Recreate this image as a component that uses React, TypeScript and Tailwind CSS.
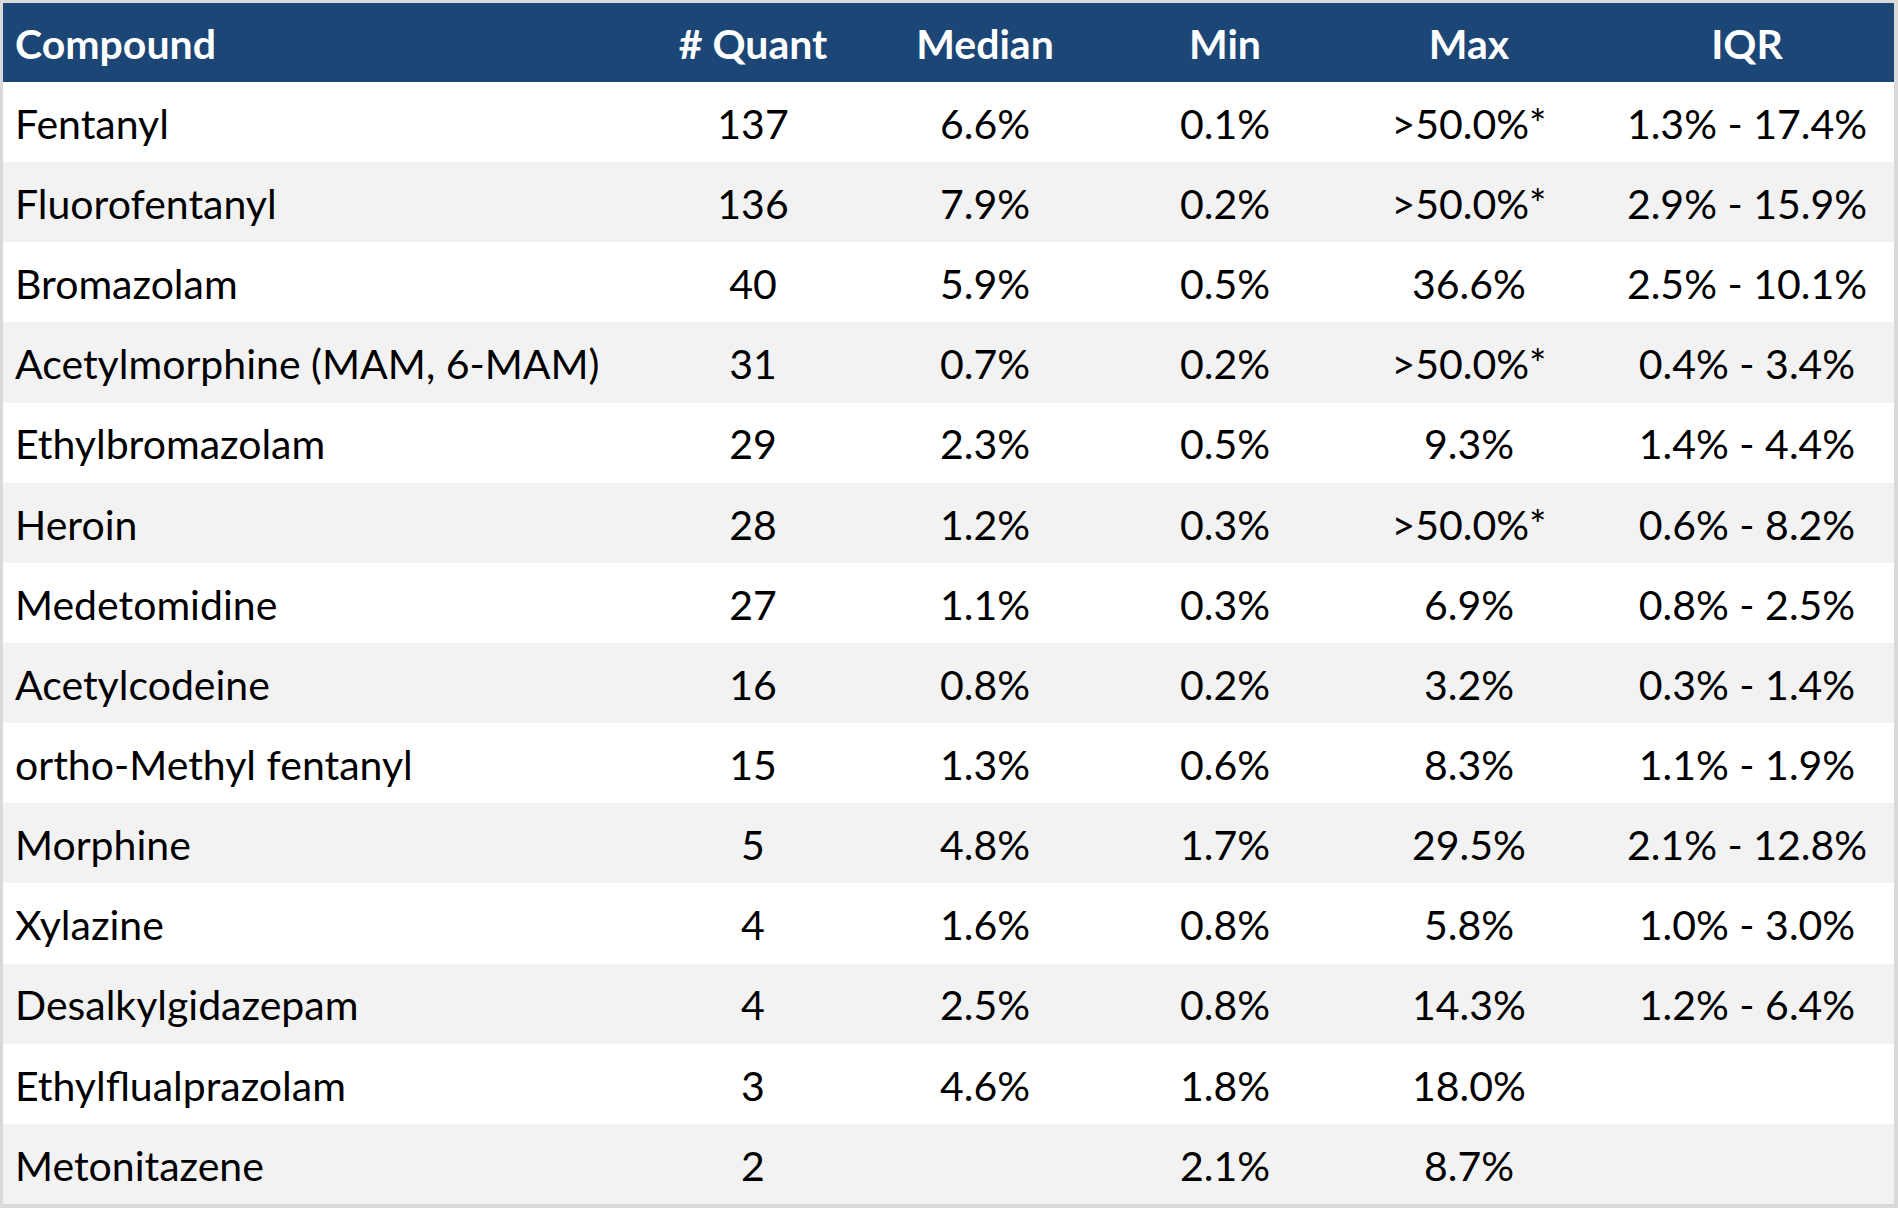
import React from "react";

type Row = {
  compound: string;
  quant: string;
  median: string;
  min: string;
  max: string;
  iqr: string;
};

const rows: Row[] = [
  { compound: "Fentanyl", quant: "137", median: "6.6%", min: "0.1%", max: ">50.0%*", iqr: "1.3% - 17.4%" },
  { compound: "Fluorofentanyl", quant: "136", median: "7.9%", min: "0.2%", max: ">50.0%*", iqr: "2.9% - 15.9%" },
  { compound: "Bromazolam", quant: "40", median: "5.9%", min: "0.5%", max: "36.6%", iqr: "2.5% - 10.1%" },
  { compound: "Acetylmorphine (MAM, 6-MAM)", quant: "31", median: "0.7%", min: "0.2%", max: ">50.0%*", iqr: "0.4% - 3.4%" },
  { compound: "Ethylbromazolam", quant: "29", median: "2.3%", min: "0.5%", max: "9.3%", iqr: "1.4% - 4.4%" },
  { compound: "Heroin", quant: "28", median: "1.2%", min: "0.3%", max: ">50.0%*", iqr: "0.6% - 8.2%" },
  { compound: "Medetomidine", quant: "27", median: "1.1%", min: "0.3%", max: "6.9%", iqr: "0.8% - 2.5%" },
  { compound: "Acetylcodeine", quant: "16", median: "0.8%", min: "0.2%", max: "3.2%", iqr: "0.3% - 1.4%" },
  { compound: "ortho-Methyl fentanyl", quant: "15", median: "1.3%", min: "0.6%", max: "8.3%", iqr: "1.1% - 1.9%" },
  { compound: "Morphine", quant: "5", median: "4.8%", min: "1.7%", max: "29.5%", iqr: "2.1% - 12.8%" },
  { compound: "Xylazine", quant: "4", median: "1.6%", min: "0.8%", max: "5.8%", iqr: "1.0% - 3.0%" },
  { compound: "Desalkylgidazepam", quant: "4", median: "2.5%", min: "0.8%", max: "14.3%", iqr: "1.2% - 6.4%" },
  { compound: "Ethylflualprazolam", quant: "3", median: "4.6%", min: "1.8%", max: "18.0%", iqr: "" },
  { compound: "Metonitazene", quant: "2", median: "", min: "2.1%", max: "8.7%", iqr: "" },
];

const cols = "grid grid-cols-[634px_232px_232px_248px_240px_1fr]";

export default function App() {
  return (
    <div className="w-[1898px] h-[1208px] bg-[#d9d9d9] pt-[3px] pl-[3px] pr-[4px] pb-[4px] font-['Lato',sans-serif] text-[41px]">
      <div className="h-full flex flex-col bg-white">
        {/* Header */}
        <div className={`${cols} h-[79px] items-center bg-[#1b4676] text-white font-bold pt-[3px]`}>
          <div className="pl-[12px]">Compound</div>
          <div className="text-center"># Quant</div>
          <div className="text-center">Median</div>
          <div className="text-center">Min</div>
          <div className="text-center">Max</div>
          <div className="text-center pl-[11px]">IQR</div>
        </div>

        {/* Body */}
        {rows.map((r, i) => (
          <div
            key={r.compound}
            className={`${cols} flex-1 items-center text-black pt-[3px] ${i % 2 === 1 ? "bg-[#f2f2f2]" : "bg-white"}`}
          >
            <div className="pl-[12px] whitespace-nowrap">{r.compound}</div>
            <div className="text-center">{r.quant}</div>
            <div className="text-center">{r.median}</div>
            <div className="text-center">{r.min}</div>
            <div className="text-center">{r.max}</div>
            <div className="text-center pl-[11px]">{r.iqr}</div>
          </div>
        ))}
      </div>
    </div>
  );
}
